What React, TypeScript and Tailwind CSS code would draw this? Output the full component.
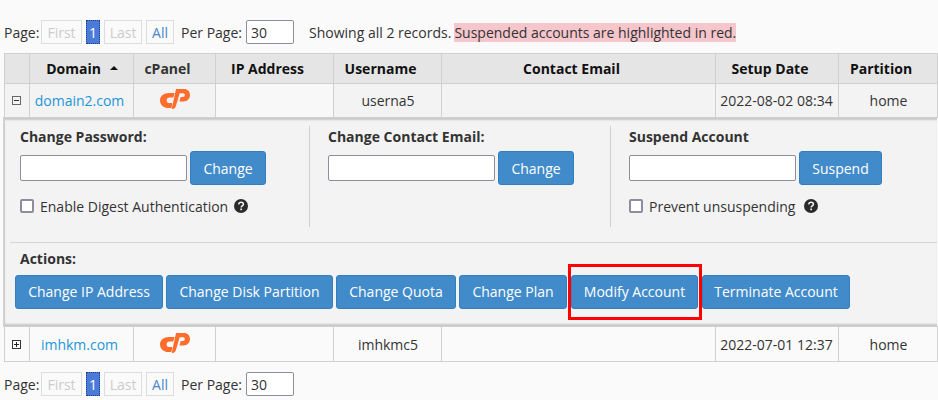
import React from 'react';

const font = "[font-family:'Open_Sans',sans-serif]";

const CpanelLogo = () => (
  <svg viewBox="0 0 30 20" className="w-[30px] h-[20px] mx-auto mb-[3px]" fill="#ff6c2c">
    <path d="M9 4h5.600l-1.300 4.600H9.500c-1.700 0-2.900 1.200-2.900 2.800 0 1.600 1.200 2.600 2.700 2.600h1.900c.9 0 1.300.7 1.100 1.500L11.300 19H8.500C3.800 19 0 15.600 0 11.400 0 7.200 3.800 4 9 4z" />
    <path d="M16 0h8c3.600 0 6 2.600 6 6 0 3.600-2.800 6.500-6.400 6.500h-4.200l1.300-4.500h2.200c1.200 0 1.900-.9 1.900-2 0-1-.7-1.700-1.800-1.700h-3.300L15.900 17c-.5 1.800-1.700 3-3.600 3h-.6z" />
  </svg>
);

const Pager = () => (
  <div className="flex items-center h-6 pl-1 text-[14px] text-[#333]">
    <span className="w-[36px]">Page:</span>
    <span className="ml-[1px] w-[41px] h-6 flex items-center justify-center border border-[#ddd] text-[#ccc]">First</span>
    <span className="ml-[4px] w-[14px] h-6 flex items-center justify-center bg-[#4a7bd8] border border-dotted border-[#1c3f8a] text-white">1</span>
    <span className="ml-[4px] w-[38px] h-6 flex items-center justify-center border border-[#ddd] text-[#ccc]">Last</span>
    <span className="ml-[4px] w-[28px] h-6 flex items-center justify-center border border-[#ddd] text-[#4a86c8]">All</span>
    <span className="ml-[7px] w-[61px] whitespace-nowrap">Per Page:</span>
    <input readOnly value="30" className="ml-[4px] w-[48px] h-6 px-1 bg-white border border-[#8f8ca0] rounded-[2px] text-[14px] text-[#333]" />
  </div>
);

const HelpIcon = () => (
  <svg viewBox="0 0 14 14" className="w-[14px] h-[14px]">
    <circle cx="7" cy="7" r="7" fill="#2b2b2b" />
    <path d="M4.700 5.300c.2-1.300 1.100-2 2.400-2 1.300 0 2.300.8 2.300 1.900 0 1.800-2.200 1.700-2.200 3.300" fill="none" stroke="#f3f3f3" strokeWidth="1.500" />
    <rect x="6.300" y="9.500" width="1.700" height="1.700" fill="#f3f3f3" />
  </svg>
);

const BlueButton = ({ label, className }: { label: string; className: string }) => (
  <button className={`h-[34px] flex items-center justify-center bg-[#428bca] border border-[#357ebd] rounded-[3px] text-[14px] text-white ${className}`}>
    {label}
  </button>
);

const FormColumn = ({ title, action, actionWidth }: { title: string; action: string; actionWidth: string }) => (
  <div className="pt-px">
    <div className="h-5 leading-5 font-bold text-[14px] text-[#333]">{title}</div>
    <div className="flex items-center mt-[4px] gap-[3px]">
      <input readOnly className="w-[167px] h-[26px] bg-white border border-[#8f8ca0] rounded-[2px]" />
      <BlueButton label={action} className={actionWidth} />
    </div>
  </div>
);

const CheckRow = ({ label, gapClass }: { label: string; gapClass: string }) => (
  <div className="flex items-center mt-[11px] h-5 text-[14px] text-[#333]">
    <span className="w-[14px] h-[14px] bg-white border-2 border-[#8f8ca0] rounded-[2px]" />
    <span className="ml-[6px]">{label}</span>
    <span className={gapClass}><HelpIcon /></span>
  </div>
);

const App = () => {
  const colClass = 'border border-[#d0d0d0]';
  const thClass = `${colClass} bg-[#e5e5e5] font-bold text-[14px] text-[#111] text-center py-0 pl-0 pr-[13px]`;
  const tdClass = `${colClass} text-[14px] text-[#333] text-center p-0`;

  return (
    <div className={`w-[938px] h-[400px] overflow-hidden bg-[#fafafa] ${font}`}>
      <div className="pt-5 flex items-center">
        <Pager />
        <span className="ml-[15px] text-[14px] text-[#333]">Showing all 2 records. </span>
        <span className="ml-[3px] h-[19px] leading-[19px] bg-[#f5c6cb] text-[14px] text-[#333]">Suspended accounts are highlighted in red.</span>
      </div>

      <table className="mt-[9px] ml-[3px] w-[933px] table-fixed border-collapse">
        <colgroup>
          <col className="w-[25px]" />
          <col className="w-[104px]" />
          <col className="w-[82px]" />
          <col className="w-[118px]" />
          <col className="w-[108px]" />
          <col className="w-[274px]" />
          <col className="w-[123px]" />
          <col className="w-[99px]" />
        </colgroup>
        <thead>
          <tr className="h-[30px]">
            <th className={thClass} />
            <th className={`${thClass} !pr-0 !pl-[2px]`}>
              <span className="inline-flex items-center justify-center gap-[9px]">
                Domain
                <svg viewBox="0 0 8 4" className="w-2 h-1 mb-[1px]"><path d="M0 4 4 0l4 4z" fill="#111" /></svg>
              </span>
            </th>
            <th className={`${thClass} !text-[#333]`}>cPanel</th>
            <th className={thClass}>IP Address</th>
            <th className={thClass}>Username</th>
            <th className={thClass}>Contact Email</th>
            <th className={thClass}>Setup Date</th>
            <th className={thClass}>Partition</th>
          </tr>
        </thead>
        <tbody>
          <tr className="h-[34px] bg-[#f3f3f3]">
            <td className={tdClass}>
              <span className="flex items-center justify-center w-[9px] h-[9px] mx-auto border border-[#666] text-[#333]">
                <span className="w-[5px] h-px bg-[#333]" />
              </span>
            </td>
            <td className={`${tdClass} !text-[#1b95d9] pr-[3px]`}>domain2.com</td>
            <td className={`${tdClass} pl-[2px]`}><CpanelLogo /></td>
            <td className={`${tdClass} bg-[#f8f8f8]`} />
            <td className={`${tdClass} pl-[2px]`}>userna5</td>
            <td className={tdClass} />
            <td className={tdClass}>2022-08-02 08:34</td>
            <td className={`${tdClass} pl-[2px]`}>home</td>
          </tr>
          <tr>
            <td colSpan={8} className="p-0 border-l-2 border-[#d0d0d0] bg-[#f3f3f3]">
              <div className="h-[208px] shadow-[inset_0_3px_2px_-1px_rgba(0,0,0,0.18),inset_0_-3px_2px_-1px_rgba(0,0,0,0.18)] pt-[8px]">
                <div className="flex h-[101px]">
                  <div className="w-[305px] pl-[15px] border-r border-[#cfcfcf]">
                    <FormColumn title="Change Password:" action="Change" actionWidth="w-[76px]" />
                    <CheckRow label="Enable Digest Authentication" gapClass="ml-[6px]" />
                  </div>
                  <div className="w-[301px] pl-[18px] border-r border-[#cfcfcf]">
                    <FormColumn title="Change Contact Email:" action="Change" actionWidth="w-[76px]" />
                  </div>
                  <div className="pl-[18px]">
                    <FormColumn title="Suspend Account" action="Suspend" actionWidth="w-[83px]" />
                    <CheckRow label="Prevent unsuspending" gapClass="ml-[9px]" />
                  </div>
                </div>
                <div className="ml-[5px] mt-[15px] border-t border-[#d5d5d5]" />
                <div className="pl-[15px] mt-[6px] h-5 leading-5 font-bold text-[14px] text-[#333]">Actions:</div>
                <div className="flex pl-[10px] mt-[6px]">
                  <BlueButton label="Change IP Address" className="w-[148px] pb-[2px]" />
                  <BlueButton label="Change Disk Partition" className="ml-[3px] w-[167px] pb-[2px]" />
                  <BlueButton label="Change Quota" className="ml-[3px] w-[120px] pb-[2px]" />
                  <BlueButton label="Change Plan" className="ml-[3px] w-[108px] pb-[2px]" />
                  <div className="relative ml-[4px]">
                    <BlueButton label="Modify Account" className="w-[127px] pb-[2px]" />
                    <div className="absolute -left-[3px] -right-[4px] -top-[11px] -bottom-[11px] border-[3px] border-[#f00]" />
                  </div>
                  <BlueButton label="Terminate Account" className="ml-[4px] w-[148px] pb-[2px]" />
                </div>
              </div>
            </td>
          </tr>
          <tr className="h-[35px]">
            <td className={tdClass}>
              <span className="flex items-center justify-center relative w-[9px] h-[9px] mx-auto border border-[#333]">
                <span className="w-[5px] h-px bg-[#222]" />
                <span className="absolute w-px h-[5px] bg-[#222]" />
              </span>
            </td>
            <td className={`${tdClass} !text-[#1b95d9] pr-[3px]`}>imhkm.com</td>
            <td className={`${tdClass} pl-[2px]`}><CpanelLogo /></td>
            <td className={tdClass} />
            <td className={`${tdClass} pl-[2px]`}>imhkmc5</td>
            <td className={tdClass} />
            <td className={tdClass}>2022-07-01 12:37</td>
            <td className={`${tdClass} pl-[2px]`}>home</td>
          </tr>
        </tbody>
      </table>

      <div className="mt-[10px]">
        <Pager />
      </div>
    </div>
  );
};

export default App;
